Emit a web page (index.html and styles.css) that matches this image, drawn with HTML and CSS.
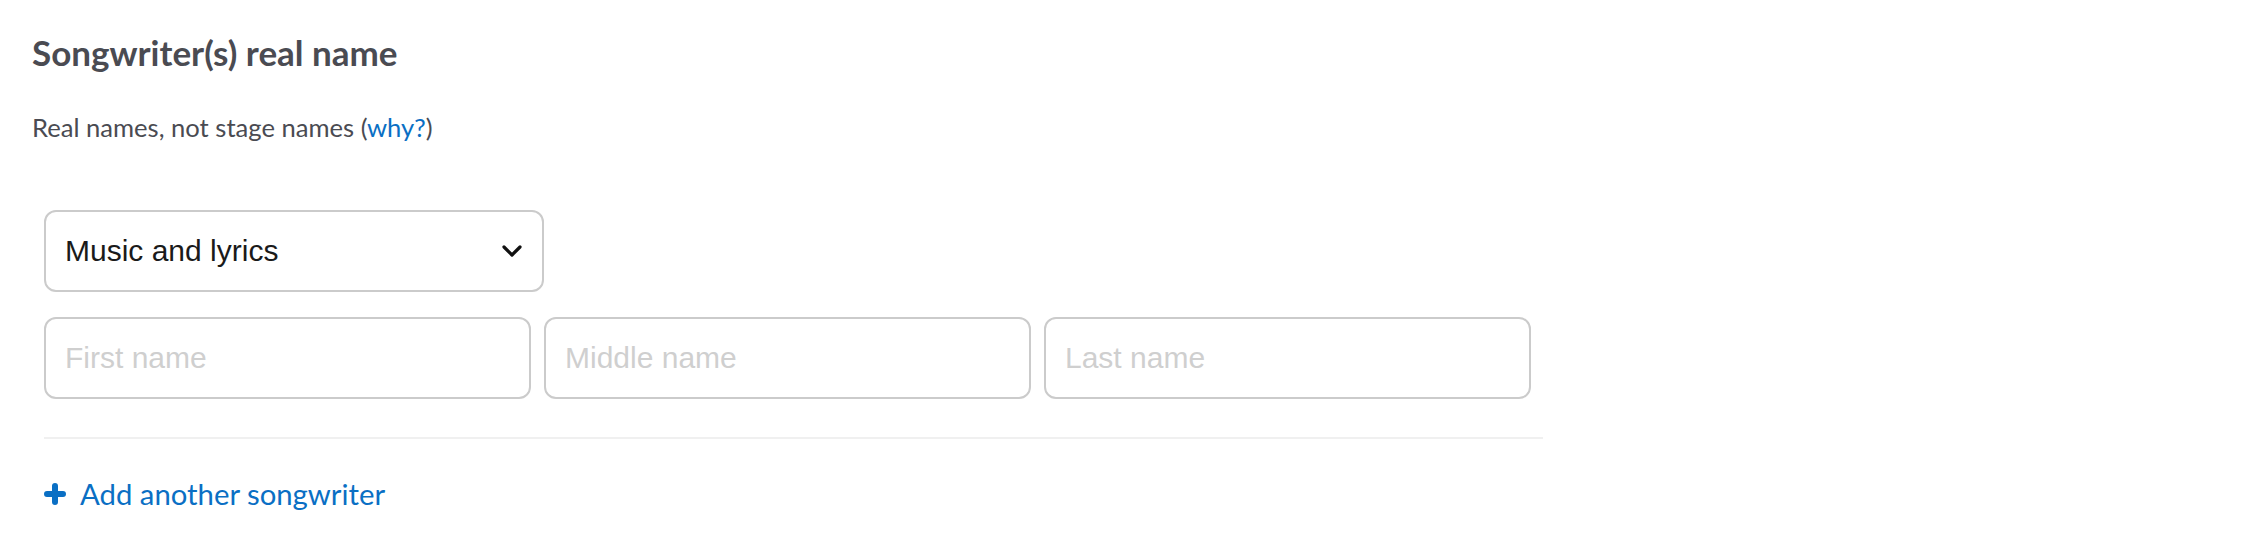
FILE: index.html
```html
<!DOCTYPE html>
<html lang="en">
<head>
<meta charset="utf-8">
<title>Songwriter(s) real name</title>
<link rel="stylesheet" href="styles.css">
</head>
<body>
<section class="songwriters">
  <h2 class="title">Songwriter(s) real name</h2>
  <p class="subtitle">Real names, not stage names (<a href="#" class="link">why?</a>)</p>
  <div class="fields">
    <div class="select">
      <span class="select-value">Music and lyrics</span>
      <svg class="chevron" width="20" height="12" viewBox="0 0 20 12" aria-hidden="true"><path d="M2 2 L10 10 L18 2" fill="none" stroke="#111" stroke-width="3.2" stroke-linecap="round" stroke-linejoin="round"/></svg>
    </div>
    <div class="names">
      <input class="input" type="text" placeholder="First name">
      <input class="input" type="text" placeholder="Middle name">
      <input class="input" type="text" placeholder="Last name">
    </div>
    <hr class="divider">
    <a href="#" class="add">
      <svg class="plus" width="22" height="22" viewBox="0 0 22 22" aria-hidden="true"><path d="M11 3 V19 M3 11 H19" stroke="#0a6fc4" stroke-width="6" stroke-linecap="round"/></svg>
      <span>Add another songwriter</span>
    </a>
  </div>
</section>
</body>
</html>
```

FILE: styles.css
```css
* { box-sizing: border-box; }
body {
  margin: 0;
  background: #fff;
  font-family: Lato, "Open Sans", sans-serif;
}
.songwriters {
  padding: 32px 0 0 32px;
}
.title {
  margin: 0;
  font-size: 35px;
  line-height: 40px;
  font-weight: 700;
  color: #4a4b52;
}
.subtitle {
  margin: 39px 0 0;
  font-size: 25.6px;
  line-height: 32px;
  color: #4a4b52;
}
.link {
  color: #0a6fc4;
  text-decoration: none;
}
.fields {
  margin: 67px 0 0 12px;
  width: 1499px;
}
.select {
  width: 500px;
  height: 82px;
  border: 2px solid #cbcbcb;
  border-radius: 12px;
  display: flex;
  align-items: center;
  justify-content: space-between;
  padding: 0 20px 0 19px;
  font-family: "Liberation Sans", Arial, sans-serif;
  font-size: 30px;
  color: #1a1a1a;
}
.chevron { display: block; }
.names {
  margin-top: 25px;
  width: 1487px;
  display: grid;
  grid-template-columns: repeat(3, 1fr);
  gap: 13px;
}
.input {
  height: 82px;
  border: 2px solid #cbcbcb;
  border-radius: 12px;
  padding: 0 19px;
  font-family: "Liberation Sans", Arial, sans-serif;
  font-size: 30px;
  color: #1a1a1a;
  background: #fff;
  outline: none;
}
.input::placeholder { color: #cfcfcf; }
.divider {
  margin: 38px 0 0;
  border: 0;
  height: 2px;
  background: #f0f0f0;
}
.add {
  margin-top: 38px;
  display: flex;
  align-items: center;
  gap: 14px;
  color: #0a6fc4;
  text-decoration: none;
  font-size: 29.3px;
  line-height: 34px;
}
.plus { display: block; }
```
